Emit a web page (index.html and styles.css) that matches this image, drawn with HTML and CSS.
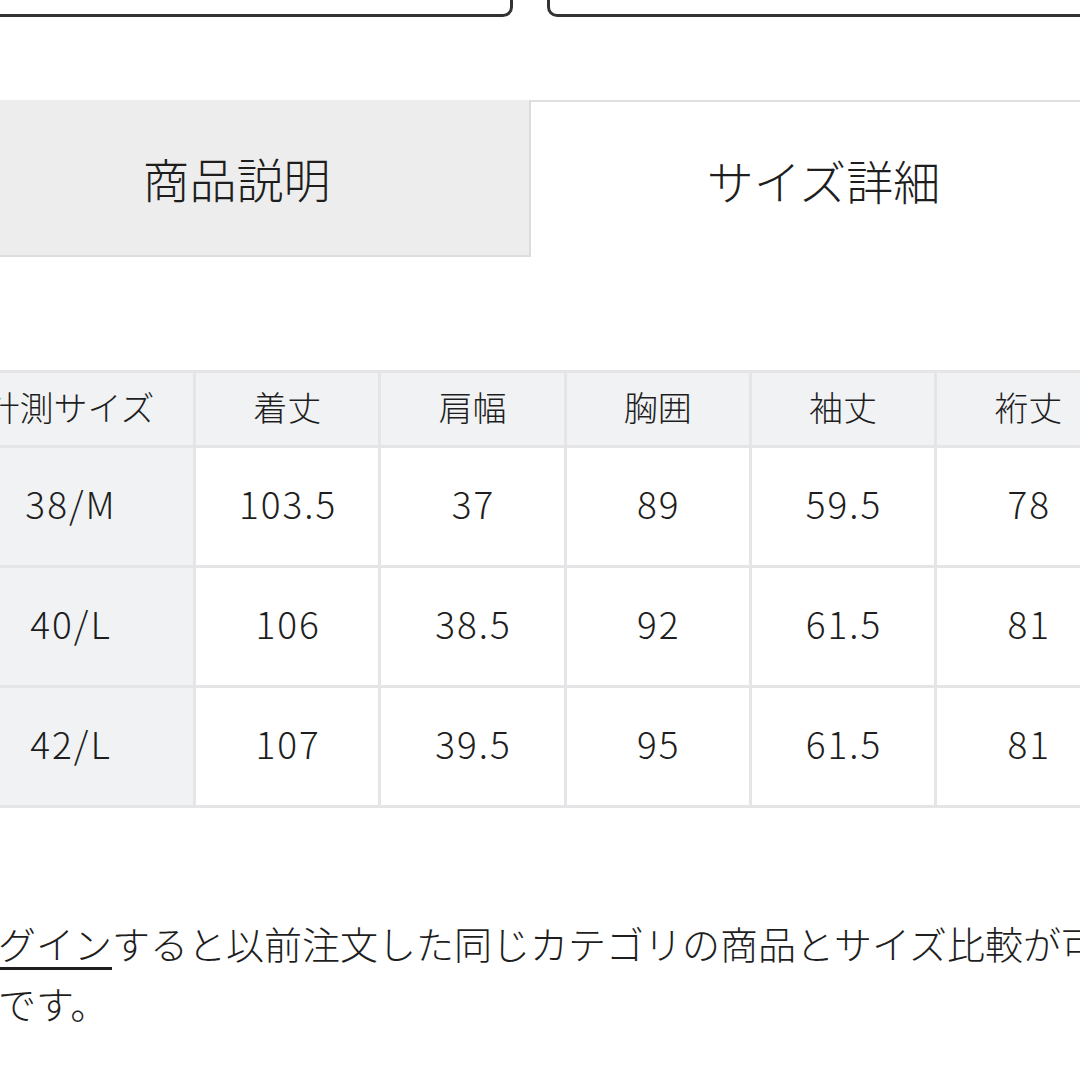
FILE: index.html
```html
<!DOCTYPE html>
<html lang="ja">
<head>
<meta charset="utf-8">
<title>サイズ詳細</title>
<link rel="stylesheet" href="styles.css">
</head>
<body>
<div class="page">
  <div class="btn-row">
    <div class="btn"></div>
    <div class="btn"></div>
  </div>
  <div class="tabs">
    <div class="tab tab-inactive">商品説明</div>
    <div class="tab tab-active">サイズ詳細</div>
  </div>
  <div class="table-wrap">
    <table class="size-table">
      <colgroup>
        <col class="col-first">
        <col class="col">
        <col class="col">
        <col class="col">
        <col class="col">
        <col class="col">
        <col class="col">
      </colgroup>
      <thead>
        <tr>
          <th>計測サイズ</th>
          <th>着丈</th>
          <th>肩幅</th>
          <th>胸囲</th>
          <th>袖丈</th>
          <th>裄丈</th>
          <th>裾幅</th>
        </tr>
      </thead>
      <tbody>
        <tr>
          <th>38/M</th>
          <td>103.5</td>
          <td>37</td>
          <td>89</td>
          <td>59.5</td>
          <td>78</td>
          <td>44</td>
        </tr>
        <tr>
          <th>40/L</th>
          <td>106</td>
          <td>38.5</td>
          <td>92</td>
          <td>61.5</td>
          <td>81</td>
          <td>46</td>
        </tr>
        <tr>
          <th>42/L</th>
          <td>107</td>
          <td>39.5</td>
          <td>95</td>
          <td>61.5</td>
          <td>81</td>
          <td>48</td>
        </tr>
      </tbody>
    </table>
  </div>
  <p class="note"><a class="login" href="#">ログイン</a>すると以前注文した同じカテゴリの商品とサイズ比較が可能です。</p>
</div>
</body>
</html>
```

FILE: styles.css
```css
html, body {
  margin: 0;
  padding: 0;
  background: #ffffff;
}

body {
  width: 1080px;
  height: 1080px;
  overflow: hidden;
  font-family: "Noto Sans CJK JP", "Noto Sans", sans-serif;
  font-weight: 300;
  color: #1e1e1e;
}

.page {
  margin-left: -56px;
  width: 1172px;
}

.btn-row {
  display: flex;
  gap: 34px;
  margin-top: -63px;
}

.btn {
  flex: 1;
  height: 80px;
  box-sizing: border-box;
  border: 3px solid #333333;
  border-radius: 10px;
}

.tabs {
  display: flex;
  margin-top: 83px;
}

.tab {
  flex: 1;
  height: 157px;
  box-sizing: border-box;
  display: flex;
  align-items: center;
  justify-content: center;
  font-size: 47px;
  color: #1e1e1e;
}

.tab-inactive {
  background: #ededed;
  border-bottom: 2px solid #dddddd;
}

.tab-active {
  background: #ffffff;
  border-top: 2px solid #e0e0e0;
  border-left: 2px solid #dcdcdc;
}

.table-wrap {
  margin-top: 113px;
  width: 1400px;
}

.size-table {
  border-collapse: collapse;
  table-layout: fixed;
  width: 1361px;
}

.col-first {
  width: 249px;
}

.col {
  width: 185.3px;
}

.size-table th,
.size-table td {
  border: 3px solid #e5e5e7;
  text-align: center;
  padding: 0;
  font-weight: 300;
  color: #1e1e1e;
}

.size-table thead th {
  height: 66px;
  padding-bottom: 6px;
  background: #f1f2f4;
  font-size: 34px;
}

.size-table tbody th,
.size-table tbody td {
  height: 109px;
  padding-bottom: 8px;
  font-size: 37px;
  letter-spacing: 2px;
  text-indent: 2px;
}

.size-table tbody th {
  background: #f1f2f4;
}

.size-table tbody td {
  background: #ffffff;
}

.note {
  margin: 105px 0 0 16px;
  width: 1150px;
  font-size: 38px;
  line-height: 60px;
  color: #1e1e1e;
}

.login {
  color: #1e1e1e;
  text-decoration: underline;
  text-decoration-thickness: 3px;
  text-underline-offset: 8px;
}
```
